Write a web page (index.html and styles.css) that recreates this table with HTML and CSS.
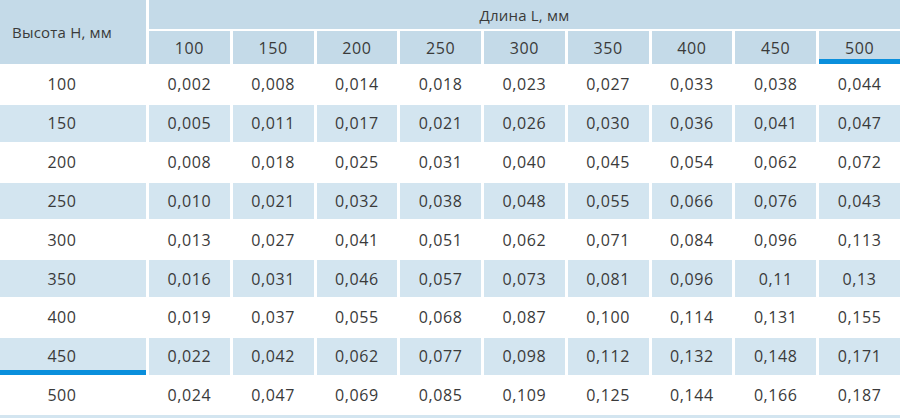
FILE: index.html
```html
<!DOCTYPE html>
<html lang="ru">
<head>
<meta charset="utf-8">
<title>Таблица</title>
<link rel="stylesheet" href="styles.css">
</head>
<body>
<div class="wrap">
<table class="grid">
<thead>
<tr class="h1">
<th class="hcorner" rowspan="2">Высота H, мм</th>
<th class="hspan" colspan="9">Длина L, мм</th>
</tr>
<tr class="h2">
<th>100</th><th>150</th><th>200</th><th>250</th><th>300</th><th>350</th><th>400</th><th>450</th><th class="mark">500</th>
</tr>
</thead>
<tbody>
<tr><th>100</th><td>0,002</td><td>0,008</td><td>0,014</td><td>0,018</td><td>0,023</td><td>0,027</td><td>0,033</td><td>0,038</td><td>0,044</td></tr>
<tr class="alt"><th>150</th><td>0,005</td><td>0,011</td><td>0,017</td><td>0,021</td><td>0,026</td><td>0,030</td><td>0,036</td><td>0,041</td><td>0,047</td></tr>
<tr><th>200</th><td>0,008</td><td>0,018</td><td>0,025</td><td>0,031</td><td>0,040</td><td>0,045</td><td>0,054</td><td>0,062</td><td>0,072</td></tr>
<tr class="alt"><th>250</th><td>0,010</td><td>0,021</td><td>0,032</td><td>0,038</td><td>0,048</td><td>0,055</td><td>0,066</td><td>0,076</td><td>0,043</td></tr>
<tr><th>300</th><td>0,013</td><td>0,027</td><td>0,041</td><td>0,051</td><td>0,062</td><td>0,071</td><td>0,084</td><td>0,096</td><td>0,113</td></tr>
<tr class="alt"><th>350</th><td>0,016</td><td>0,031</td><td>0,046</td><td>0,057</td><td>0,073</td><td>0,081</td><td>0,096</td><td>0,11</td><td>0,13</td></tr>
<tr><th>400</th><td>0,019</td><td>0,037</td><td>0,055</td><td>0,068</td><td>0,087</td><td>0,100</td><td>0,114</td><td>0,131</td><td>0,155</td></tr>
<tr class="alt"><th class="mark">450</th><td>0,022</td><td>0,042</td><td>0,062</td><td>0,077</td><td>0,098</td><td>0,112</td><td>0,132</td><td>0,148</td><td>0,171</td></tr>
<tr><th>500</th><td>0,024</td><td>0,047</td><td>0,069</td><td>0,085</td><td>0,109</td><td>0,125</td><td>0,144</td><td>0,166</td><td>0,187</td></tr>
</tbody>
</table>
<div class="foot"></div>
</div>
</body>
</html>
```
FILE: styles.css
```css
html, body {
  margin: 0;
  padding: 0;
  background: #ffffff;
  overflow: hidden;
}
body {
  width: 900px;
  height: 418px;
  font-family: "Open Sans", "Noto Sans", "DejaVu Sans", sans-serif;
  font-size: 16px;
  letter-spacing: 0.6px;
  color: #3a3a3a;
}
.wrap {
  width: 906px;
  margin: -2px 0 0 -3px;
}
.grid {
  border-collapse: separate;
  border-spacing: 3px 2px;
  table-layout: fixed;
  width: 906px;
}
.grid th,
.grid td {
  padding: 0;
  text-align: center;
  vertical-align: middle;
  font-weight: normal;
  line-height: 18px;
}
.grid thead th {
  background: #c4dae8;
}
.grid thead .hcorner {
  width: 124px;
  padding-right: 22px;
  font-size: 15px;
  letter-spacing: 0.2px;
}
.grid thead .hspan {
  font-size: 15px;
  letter-spacing: 0.2px;
}
.h1 th {
  height: 29px;
}
.h2 th {
  height: 33px;
}
.grid tbody th {
  padding-right: 22px;
}
.grid tbody td,
.grid tbody th {
  height: 36.85px;
}
.grid tbody tr.alt th,
.grid tbody tr.alt td {
  background: #d3e5f0;
}
.grid .mark {
  box-shadow: inset 0 -5px 0 #0a8fdc;
}
.foot {
  height: 4px;
  margin: -1px 0 0 3px;
  background: #d3e5f0;
}
```
